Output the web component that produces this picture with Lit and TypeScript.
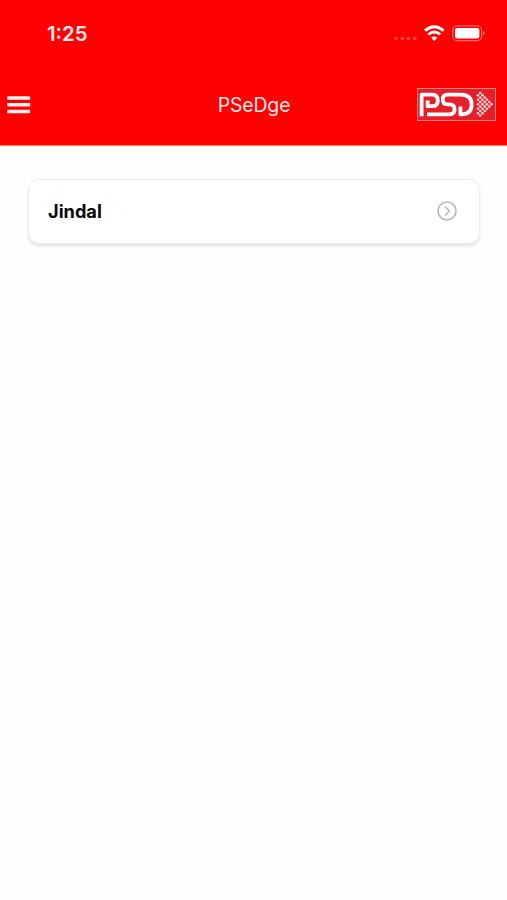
import { LitElement, html, css, svg } from "lit";
import { customElement } from "lit/decorators.js";

@customElement("brand-logo")
export class BrandLogo extends LitElement {
  static styles = css`
    :host { display: block; width: 79px; height: 33px; }
    svg { display: block; }
  `;
  // Arrowhead of staggered dots, narrowing to the right
  private dots() {
    const out = [];
    for (let i = 0; i <= 6; i++) {
      for (let j = -5; j <= 5; j++) {
        if ((i + j) % 2 === 0 && i + Math.abs(j) <= 6) {
          out.push(svg`<circle cx=${61 + i * 2.25} cy=${16.3 + j * 2.25} r="1.3" />`);
        }
      }
    }
    return out;
  }
  render() {
    return html`<svg width="79" height="33" viewBox="0 0 79 33">
      <rect x="0.5" y="0.5" width="78" height="32" fill="#e6202a" stroke="#f08487" />
      <g fill="none" stroke="#fff" stroke-width="3.8" stroke-linejoin="round">
        <path d="M4.6 28.2V6.6H15.2Q20.8 6.6 20.8 12.4T15.2 18.2H10.6V12.5" />
        <path d="M10 26.3H32.6Q37.6 26.3 37.6 21.3T32.6 16.4H30.4Q25.8 16.4 25.8 11.5T30.4 6.6H43.5Q54.6 6.6 54.6 16.4T44.4 26.3H43.4V18.5" />
      </g>
      <g fill="#ffdede">${this.dots()}</g>
    </svg>`;
  }
}

@customElement("app-root")
export class AppRoot extends LitElement {
  static styles = css`
    :host {
      display: block;
      height: 900px;
      background: #fefefe;
      font-family: Inter, "Liberation Sans", sans-serif;
    }
    * { box-sizing: border-box; }
    svg { display: block; }
    header { height: 146px; background: #fe0000; border-bottom: 1px solid #ff7474; color: #ffe9e9; }
    .status {
      height: 67px;
      padding: 0 21px 0 47px;
      display: flex;
      align-items: center;
      justify-content: space-between;
    }
    .time { font-size: 20.3px; font-weight: 600; line-height: 24px; }
    .bar {
      height: 75px;
      padding: 0 11px 0 7px;
      display: grid;
      grid-template-columns: 79px 1fr 79px;
      align-items: center;
    }
    .title { padding-left: 5px; font-size: 19.4px; line-height: 24px; text-align: center; letter-spacing: -0.1px; }
    .card {
      margin: 33px 27px 0 28px;
      height: 65px;
      padding: 0 22px 2px 19px;
      display: flex;
      align-items: center;
      justify-content: space-between;
      background: #fff;
      border: 1px solid #eee;
      border-radius: 11px;
      box-shadow: 0 2px 3px rgba(0, 0, 0, 0.11);
    }
    .name { font-size: 18.2px; line-height: 22px; font-weight: 700; color: #080808; }
  `;
  render() {
    return html`
      <header>
        <div class="status">
          <span class="time">1:25</span>
          <svg width="93" height="24" viewBox="393 22 93 24">
            <g fill="#ff4a4a">
              <circle cx="396" cy="38.5" r="1.8" /><circle cx="402.3" cy="38.5" r="1.8" />
              <circle cx="408.5" cy="38.5" r="1.8" /><circle cx="414.8" cy="38.5" r="1.8" />
            </g>
            <g fill="none" stroke="#fff" stroke-width="2.9">
              <path d="M425 30.6Q434.3 22.8 443.7 30.6" />
              <path d="M428.3 34.5Q434.3 29.5 440.3 34.5" />
            </g>
            <path d="M431.2 37.7Q434.3 35.3 437.4 37.7L434.3 41Z" fill="#fff" />
            <rect x="452.8" y="25.8" width="28.8" height="14.8" rx="4.3" fill="none" stroke="#ff6c6c" stroke-width="1.2" />
            <rect x="455" y="28" width="24.4" height="10.4" rx="2.2" fill="#fff" />
            <path d="M483 31V35.4Q485 34.6 485 33.2T483 31Z" fill="#ff6c6c" />
          </svg>
        </div>
        <div class="bar">
          <svg width="24" height="20" viewBox="0 0 24 20">
            <g fill="#fff1f1">
              <rect x="0.3" y="1.2" width="22.9" height="3.5" rx="0.6" />
              <rect x="0.3" y="8" width="22.9" height="3.5" rx="0.6" />
              <rect x="0.3" y="14.8" width="22.9" height="3.5" rx="0.6" />
            </g>
          </svg>
          <span class="title">PSeDge</span>
          <brand-logo></brand-logo>
        </div>
      </header>
      <main class="card">
        <span class="name">Jindal</span>
        <svg width="20" height="20" viewBox="0 0 20 20" fill="none" stroke="#b8b8b8" stroke-width="1.6">
          <circle cx="10" cy="10" r="9" />
          <path d="M8.4 6L12.4 10L8.4 14" stroke-linecap="round" stroke-linejoin="round" />
        </svg>
      </main>
    `;
  }
}
